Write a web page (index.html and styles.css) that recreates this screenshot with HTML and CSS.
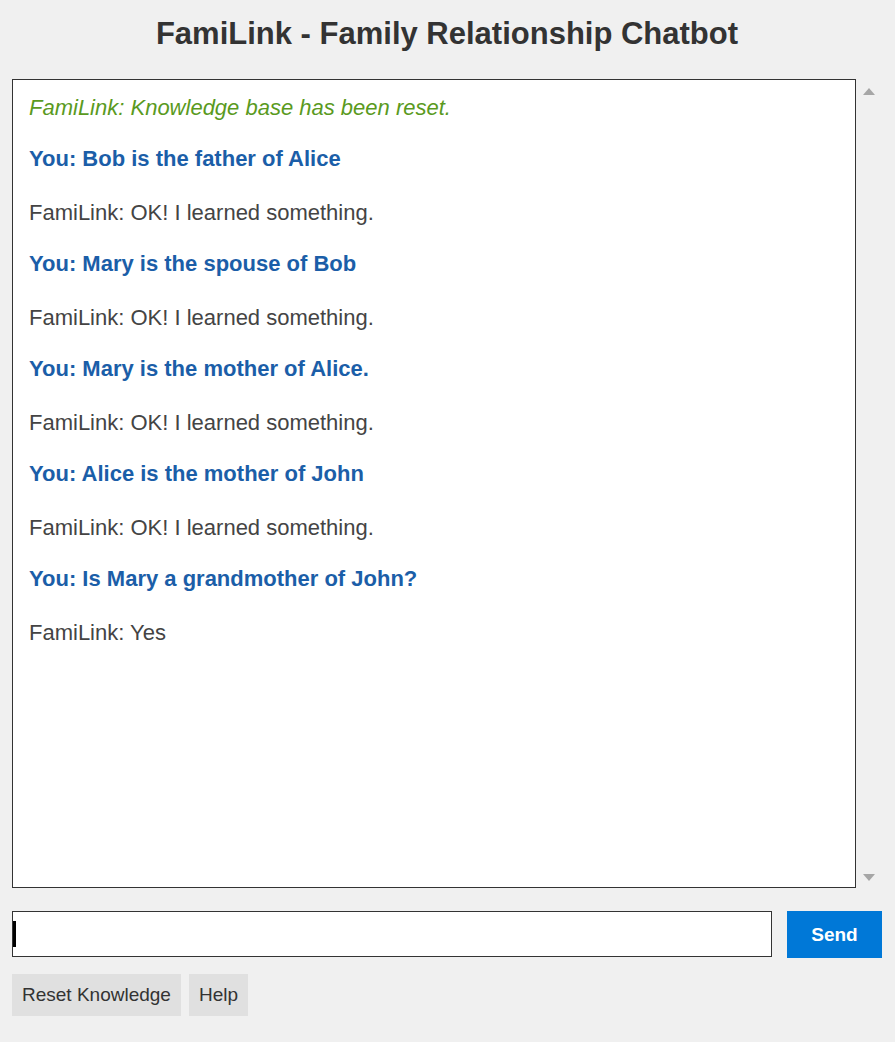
FILE: index.html
```html
<!DOCTYPE html>
<html>
<head>
<meta charset="utf-8">
<title>FamiLink</title>
<link rel="stylesheet" href="styles.css">
</head>
<body>
<h1 class="title">FamiLink - Family Relationship Chatbot</h1>
<div class="chat-wrap">
  <div class="chat">
    <p class="msg sys">FamiLink: Knowledge base has been reset.</p>
    <p class="msg user">You: Bob is the father of Alice</p>
    <p class="msg bot">FamiLink: OK! I learned something.</p>
    <p class="msg user">You: Mary is the spouse of Bob</p>
    <p class="msg bot">FamiLink: OK! I learned something.</p>
    <p class="msg user">You: Mary is the mother of Alice.</p>
    <p class="msg bot">FamiLink: OK! I learned something.</p>
    <p class="msg user">You: Alice is the mother of John</p>
    <p class="msg bot">FamiLink: OK! I learned something.</p>
    <p class="msg user">You: Is Mary a grandmother of John?</p>
    <p class="msg bot">FamiLink: Yes</p>
  </div>
  <div class="scrollbar">
    <span class="arrow up"></span>
    <span class="arrow down"></span>
  </div>
</div>
<div class="input-row">
  <div class="input"><span class="caret"></span></div>
  <button class="send">Send</button>
</div>
<div class="tools">
  <button class="tool">Reset Knowledge</button>
  <button class="tool">Help</button>
</div>
</body>
</html>
```

FILE: styles.css
```css
html, body {
  margin: 0;
  background: #f0f0f0;
}
body {
  padding: 0 13px 0 12px;
  font-family: "Liberation Sans", Arial, sans-serif;
  color: #444;
}
.title {
  margin: 0;
  padding-top: 16px;
  height: 79px;
  box-sizing: border-box;
  text-align: center;
  font-size: 31px;
  line-height: 36px;
  font-weight: bold;
  color: #333;
}
.chat-wrap {
  display: flex;
  height: 809px;
}
.chat {
  flex: 1;
  background: #fff;
  border: 1.5px solid #333;
  padding: 16px 16px 0 16px;
  box-sizing: border-box;
}
.msg {
  margin: 0;
  font-size: 22px;
  line-height: 24px;
}
.sys {
  font-style: italic;
  color: #5a9a1e;
  margin-bottom: 27px;
}
.user {
  font-weight: bold;
  color: #1b5ea8;
  margin-bottom: 30px;
}
.bot {
  color: #444;
  margin-bottom: 27px;
}
.scrollbar {
  width: 26px;
  display: flex;
  flex-direction: column;
  justify-content: space-between;
  align-items: center;
  padding: 9px 0 7px 0;
  box-sizing: border-box;
}
.arrow {
  width: 0;
  height: 0;
  border-left: 6px solid transparent;
  border-right: 6px solid transparent;
}
.up { border-bottom: 7px solid #a6a6a6; }
.down { border-top: 7px solid #a6a6a6; }
.input-row {
  display: flex;
  gap: 15px;
  margin-top: 23px;
}
.input {
  position: relative;
  width: 760px;
  height: 46px;
  box-sizing: border-box;
  background: #fff;
  border: 1.5px solid #333;
}
.caret {
  position: absolute;
  left: 0;
  top: 9px;
  width: 3px;
  height: 26px;
  background: #000;
}
.send {
  width: 95px;
  height: 47px;
  border: none;
  background: #0078d7;
  color: #fff;
  font-family: "Liberation Sans", Arial, sans-serif;
  font-weight: bold;
  font-size: 19px;
  padding: 0;
}
.tools {
  display: flex;
  gap: 8px;
  margin-top: 16px;
}
.tool {
  height: 42px;
  border: none;
  background: #e0e0e0;
  color: #333;
  font-family: "Liberation Sans", Arial, sans-serif;
  font-size: 19px;
  padding: 0 10px;
}
```
